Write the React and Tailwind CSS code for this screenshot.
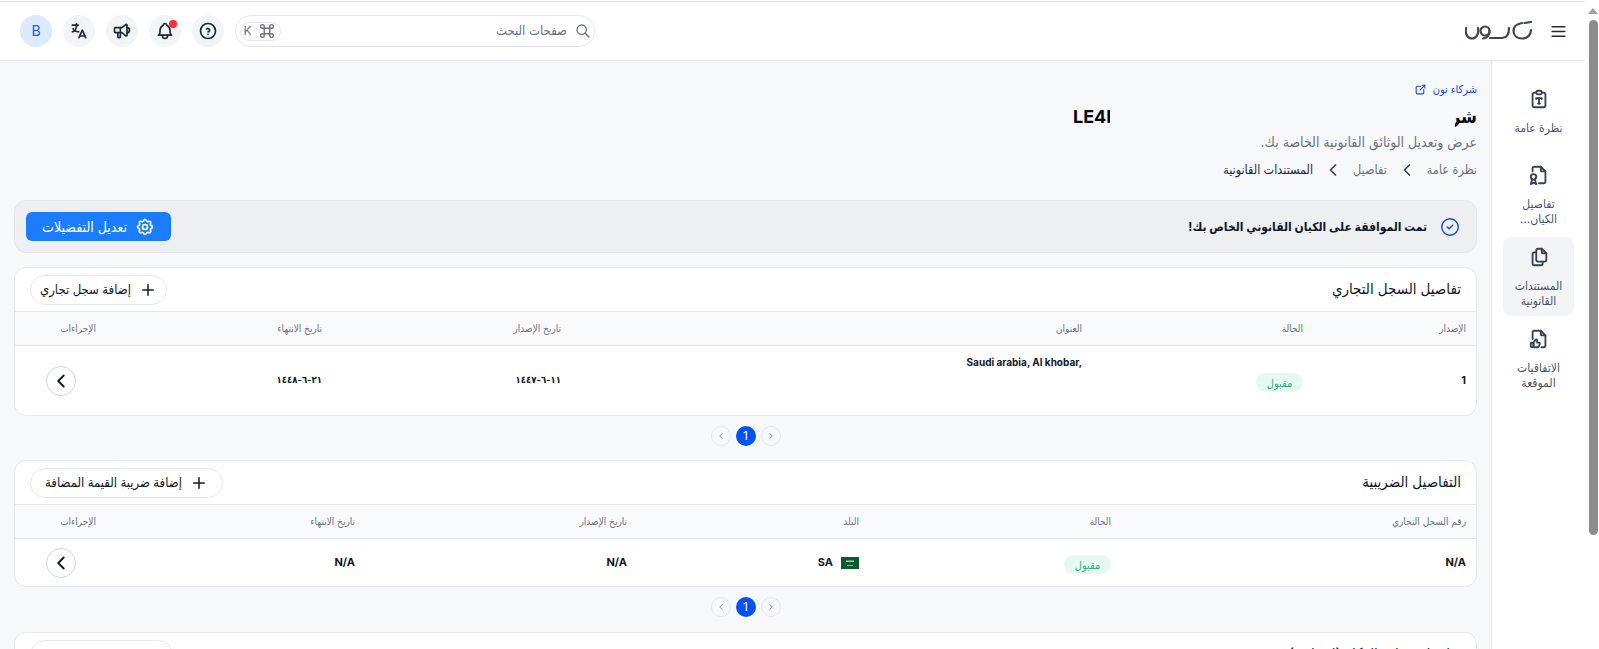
import React from 'react';
import {
  TbMenu2, TbSearch, TbCommand, TbHelpCircle, TbBell, TbSpeakerphone, TbLanguage, TbExternalLink,
  TbClipboardTypography, TbFileCertificate, TbFiles, TbFileLike, TbChevronLeft, TbChevronRight,
  TbCircleCheck, TbSettings, TbPlus,
} from 'react-icons/tb';

const NoonLogo = () => (
  <svg width="68" height="20" viewBox="0 0 68 20" fill="none" stroke="#3f4652" strokeWidth="2.200" strokeLinecap="round">
    <path d="M1 7C0 14 3 17.500 7 17.500S14 14 13 7" />
    <circle cx="20" cy="10" r="4.500" />
    <path d="M24.500 10C25 14 22 17 18 17.500" />
    <path d="M25 17H37C41 17 44 14 44 7" />
    <path d="M57 2C51 3 48.500 6 48.500 10C48.500 14.500 52 17.500 57 17.500C62 17.500 66 14 66 9" />
    <path d="M59.500 2L66 1" />
  </svg>
);

const sideItems = [
  { icon: TbClipboardTypography, label: 'نظرة عامة' },
  { icon: TbFileCertificate, label: 'تفاصيل الكيان...' },
  { icon: TbFiles, label: 'المستندات القانونية', active: true },
  { icon: TbFileLike, label: 'الاتفاقيات الموقعة' },
];

const HeaderCircle = ({ children, className = 'bg-gray-100' }) => (
  <div className={`w-8 h-8 rounded-full flex items-center justify-center relative ${className}`}>{children}</div>
);

const Header = () => (
  <header className="h-[60px] shrink-0 mt-px bg-white border-t border-b border-gray-200 flex items-center justify-between pr-[17px] pl-5">
    <div className="flex items-center gap-4">
      <TbMenu2 className="w-[19px] h-[19px] text-gray-800" />
      <NoonLogo />
    </div>
    <div className="flex items-center gap-[11px]">
      <div className="w-[360px] h-8 rounded-full border border-gray-200 flex items-center justify-between pr-[3px] pl-1">
        <div className="flex items-center gap-2 text-[13px] text-gray-500">
          <TbSearch className="w-4 h-4" />
          <span>صفحات البحث</span>
        </div>
        <div dir="rtl" className="h-[19px] w-[41px] rounded-full border border-gray-200 flex items-center justify-center gap-1 text-gray-500 text-xs">
          <TbCommand className="w-[22px] h-[22px] stroke-[1.5]" />
          <span>K</span>
        </div>
      </div>
      <HeaderCircle><TbHelpCircle className="w-5 h-5 text-gray-800" /></HeaderCircle>
      <HeaderCircle>
        <TbBell className="w-5 h-5 text-gray-800" />
        <span className="absolute top-[5px] right-1 w-2 h-2 rounded-full bg-red-500" />
      </HeaderCircle>
      <HeaderCircle><TbSpeakerphone className="w-5 h-5 text-gray-800" /></HeaderCircle>
      <HeaderCircle><TbLanguage className="w-5 h-5 text-gray-800" /></HeaderCircle>
      <HeaderCircle className="bg-blue-100"><span className="text-blue-600 text-sm">B</span></HeaderCircle>
    </div>
  </header>
);

const Sidebar = () => (
  <aside className="w-[94px] shrink-0 bg-white border-l border-gray-200 flex flex-col items-center pt-[18px] gap-[3px]">
    {sideItems.map((item) => {
      const Icon = item.icon;
      return (
        <div
          key={item.label}
          className={`w-[71px] min-h-[73px] flex flex-col items-center pt-[9px] pb-2 rounded-lg text-center ${item.active ? 'bg-gray-100' : ''}`}
        >
          <Icon className="w-[22px] h-[22px] text-gray-700" />
          <span className="mt-[10px] text-xs leading-[15px] text-gray-600">{item.label}</span>
        </div>
      );
    })}
  </aside>
);

const Badge = () => (
  <span className="inline-flex items-center justify-center w-[47px] h-[19px] rounded-full bg-[#e6f9f1] text-[#2fae84] text-[11px]">مقبول</span>
);

const RowButton = () => (
  <button className="w-[30px] h-[30px] rounded-full bg-white border border-gray-300 flex items-center justify-center">
    <TbChevronLeft className="w-[22px] h-[22px] text-gray-900" />
  </button>
);

const Pagination = ({ className }) => (
  <div dir="ltr" className={`flex items-center justify-center gap-[5px] ${className}`}>
    <span className="w-5 h-5 rounded-full border border-gray-200 flex items-center justify-center">
      <TbChevronLeft className="w-2.5 h-2.5 text-gray-500" />
    </span>
    <span className="w-5 h-5 rounded-full bg-[#0451f5] text-white text-xs flex items-center justify-center">1</span>
    <span className="w-5 h-5 rounded-full border border-gray-200 flex items-center justify-center">
      <TbChevronRight className="w-2.5 h-2.5 text-gray-500" />
    </span>
  </div>
);

const CardHeader = ({ title, action, actionWidth }) => (
  <div className="h-[44px] flex items-center justify-between px-[15px] border-b border-gray-200">
    <h2 className="text-[15px] font-medium text-gray-900">{title}</h2>
    <button className={`h-[30px] rounded-full bg-white border border-gray-200 flex items-center justify-center gap-2 text-[13px] font-medium text-gray-900 whitespace-nowrap ${actionWidth}`}>
      <TbPlus className="w-[18px] h-[18px]" />
      {action}
    </button>
  </div>
);

const Th = ({ children }) => <div className="text-[10px] text-gray-500">{children}</div>;

const Td = ({ children }) => <div className="text-[11px] font-bold text-gray-900">{children}</div>;

const DateCell = ({ children }) => (
  <div className="text-[9.5px] font-bold tracking-[-0.8px] text-gray-900">{children}</div>
);

const SaudiFlag = () => (
  <svg width="18" height="12" viewBox="0 0 18 12">
    <rect width="18" height="12" fill="#0b5a2e" />
    <rect x="5" y="3.500" width="8" height="1.500" fill="#a9c7b4" />
    <rect x="6" y="8" width="6" height="0.600" fill="#d6e5db" />
  </svg>
);

export default function App() {
  return (
    <div dir="ltr" className="h-screen overflow-hidden flex bg-white" style={{ fontFamily: 'Inter, "DejaVu Sans Condensed", "DejaVu Sans", sans-serif' }}>
      <div dir="rtl" className="flex-1 min-w-0 flex flex-col">
        <Header />
        <div className="flex-1 min-h-0 flex">
          <Sidebar />
          <main className="flex-1 min-w-0 bg-[#f7f8fa] px-[14px] pt-[21px] overflow-hidden">
            <a className="h-[15px] flex items-center gap-1.5 text-[11px] text-blue-700">
              شركاء نون
              <TbExternalLink className="w-[13px] h-[13px]" />
            </a>
            <div className="h-5 mt-[10px] flex items-center text-lg font-bold text-gray-950">
              <span className="w-[22px] overflow-hidden whitespace-nowrap">شركة</span>
              <span dir="ltr" className="w-[37px] mr-[345px] overflow-hidden whitespace-nowrap">LE4H</span>
            </div>
            <p className="mt-[5px] text-sm text-gray-500 leading-5">عرض وتعديل الوثائق القانونية الخاصة بك.</p>
            <nav className="mt-2 flex items-center gap-2.5 text-[12.5px] text-gray-500 leading-5">
              <span>نظرة عامة</span>
              <TbChevronLeft className="w-5 h-5 text-gray-700" />
              <span>تفاصيل</span>
              <TbChevronLeft className="w-5 h-5 text-gray-700" />
              <span className="font-medium text-gray-800">المستندات القانونية</span>
            </nav>

            <div className="mt-5 h-[53px] rounded-xl bg-[#edeff1] border border-gray-200 flex items-center justify-between pr-[15px] pl-[11px]">
              <div className="flex items-center gap-3 text-xs font-bold text-gray-900">
                <TbCircleCheck className="w-[22px] h-[22px] text-blue-700 stroke-[1.5]" />
                <span>تمت الموافقة على الكيان القانوني الخاص بك!</span>
              </div>
              <button className="w-[145px] h-[29px] rounded-md bg-[#1a7dff] text-white text-sm flex items-center justify-center gap-2">
                <TbSettings className="w-5 h-5" />
                تعديل التفضيلات
              </button>
            </div>

            <section className="mt-[14px] bg-white rounded-xl border border-gray-200 overflow-hidden">
              <CardHeader title="تفاصيل السجل التجاري" action="إضافة سجل تجاري" actionWidth="w-[137px]" />
              <div className="grid grid-cols-[163px_221px_521px_239px_226px_1fr] h-[34px] items-center bg-gray-50 border-b border-gray-200 pr-[10px]">
                <Th>الإصدار</Th><Th>الحالة</Th><Th>العنوان</Th><Th>تاريخ الإصدار</Th><Th>تاريخ الانتهاء</Th><Th>الإجراءات</Th>
              </div>
              <div className="grid grid-cols-[163px_221px_521px_239px_226px_1fr] h-[69px] items-center pr-[10px]">
                <Td>1</Td>
                <div><Badge /></div>
                <div className="self-start pt-[9px] text-[10px] font-bold text-gray-900"><span dir="ltr">Saudi arabia, Al khobar,</span></div>
                <DateCell>١١-٦-١٤٤٧</DateCell>
                <DateCell>٢١-٦-١٤٤٨</DateCell>
                <div className="pr-5"><RowButton /></div>
              </div>
            </section>

            <Pagination className="pt-[10px] pb-[14px]" />

            <section className="bg-white rounded-xl border border-gray-200 overflow-hidden">
              <CardHeader title="التفاصيل الضريبية" action="إضافة ضريبة القيمة المضافة" actionWidth="w-[193px]" />
              <div className="grid grid-cols-[355px_252px_232px_272px_259px_1fr] h-[34px] items-center bg-gray-50 border-b border-gray-200 pr-[10px]">
                <Th>رقم السجل التجاري</Th><Th>الحالة</Th><Th>البلد</Th><Th>تاريخ الإصدار</Th><Th>تاريخ الانتهاء</Th><Th>الإجراءات</Th>
              </div>
              <div className="grid grid-cols-[355px_252px_232px_272px_259px_1fr] h-[47px] items-center pr-[10px]">
                <Td>N/A</Td>
                <div><Badge /></div>
                <div className="flex items-center gap-2"><SaudiFlag /><Td>SA</Td></div>
                <Td>N/A</Td>
                <Td>N/A</Td>
                <div className="pr-5"><RowButton /></div>
              </div>
            </section>

            <Pagination className="pt-[10px] pb-[15px]" />

            <section className="bg-white rounded-xl border border-gray-200 overflow-hidden">
              <CardHeader title="تفاصيل شهادة الزكاة (اختياري)" action="إضافة شهادة الزكاة" actionWidth="w-[143px]" />
            </section>
          </main>
        </div>
      </div>
      <div className="w-[14px] shrink-0 bg-white flex flex-col items-center pt-2 pl-0.5">
        <span className="w-0 h-0 border-x-[5px] border-x-transparent border-b-[6px] border-b-gray-400" />
        <span className="mt-[6px] w-[9px] h-[515px] rounded-full bg-[#8c8c8c]" />
      </div>
    </div>
  );
}
